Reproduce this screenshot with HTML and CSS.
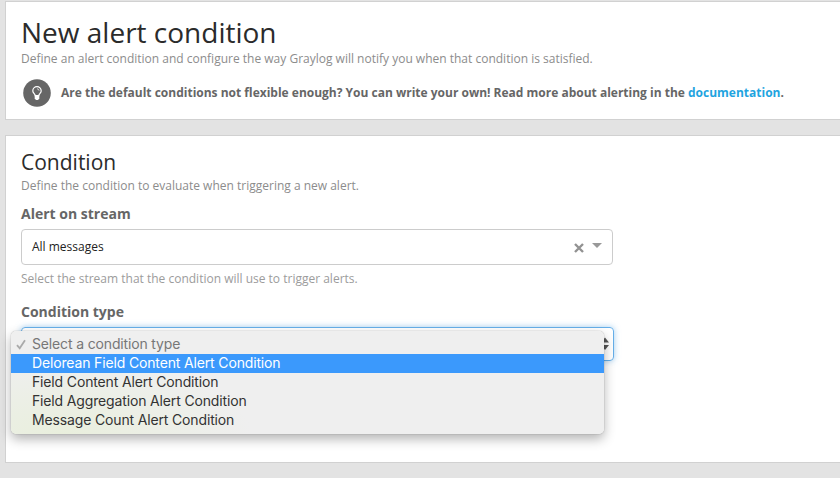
FILE: index.html
```html
<!DOCTYPE html>
<html lang="en">
<head>
<meta charset="utf-8">
<title>New alert condition</title>
<link rel="stylesheet" href="styles.css">
</head>
<body>
<section class="panel intro">
  <h1>New alert condition</h1>
  <p class="description">Define an alert condition and configure the way Graylog will notify you when that condition is satisfied.</p>
  <div class="support">
    <svg class="bulb" viewBox="0 0 28 28" width="28" height="28">
      <circle cx="14" cy="14" r="13.8" fill="#666"/>
      <path d="M12.2 16.6c0-1.500-2.400-2.500-2.400-4.700a4.200 4.200 0 0 1 8.400 0c0 2.200-2.400 3.200-2.400 4.700z" fill="none" stroke="#fff" stroke-width="1.200"/>
      <path d="M14 9.900c1.200 0 2 .7 2 1.700" fill="none" stroke="#fff" stroke-width=".8"/>
      <path d="M11.700 16.300h4.600v3.200l-1.300 1.500h-2l-1.300-1.500z" fill="#fff"/>
    </svg>
    <strong>Are the default conditions not flexible enough? You can write your own! Read more about alerting in the <a href="#">documentation</a>.</strong>
  </div>
</section>
<section class="panel condition">
  <h2>Condition</h2>
  <p class="description">Define the condition to evaluate when triggering a new alert.</p>
  <div class="label">Alert on stream</div>
  <div class="stream-select">
    <span class="value">All messages</span>
    <svg class="clear" viewBox="0 0 10 10" width="10" height="10"><path d="M1 1l8 8M9 1L1 9" stroke="#929292" stroke-width="2.400"/></svg>
    <span class="caret"></span>
  </div>
  <p class="help">Select the stream that the condition will use to trigger alerts.</p>
  <div class="label">Condition type</div>
  <div class="type-select">
    <svg class="arrows" viewBox="0 0 8 14" width="8" height="14"><path d="M0 5.500L4 .5l4 5zM0 8h8l-4 5z" fill="#555"/></svg>
    <ul class="menu">
      <li class="placeholder"><svg class="check" viewBox="0 0 10 11" width="10" height="11"><path d="M1 6.200L3.700 9.300 9 1.200" fill="none" stroke="#aaa" stroke-width="1.800"/></svg><span>Select a condition type</span></li>
      <li class="active"><span>Delorean Field Content Alert Condition</span></li>
      <li><span>Field Content Alert Condition</span></li>
      <li><span>Field Aggregation Alert Condition</span></li>
      <li><span>Message Count Alert Condition</span></li>
    </ul>
  </div>
</section>
</body>
</html>
```
FILE: styles.css
```css
* { box-sizing: border-box; }
body {
  margin: 0;
  padding: 1px 0 0 5px;
  height: 478px;
  overflow: hidden;
  background: #e3e3e3;
  color: #666;
  font: 12px/16px "Open Sans", sans-serif;
}
h1, h2, p, ul { margin: 0; padding: 0; }
h1, h2 { color: #2b2b2b; font-weight: 400; }
h1 { font-size: 28px; line-height: 38px; }
h2 { font-size: 21px; line-height: 28px; }
a { color: #1fa4e0; text-decoration: none; }
.panel {
  background: #fff;
  border: 1px solid #d1d1d1;
  border-right: 0;
  padding-left: 15px;
  white-space: nowrap;
}
.intro { height: 119px; padding-top: 11px; }
.condition { height: 328px; margin-top: 15px; padding-top: 12px; }
.description { color: #8c8c8c; }
.condition .description { margin-top: 2px; }
.support { display: flex; align-items: center; margin: 12px 0 0 2px; }
.bulb { margin-right: 10px; }
.label { font-size: 14px; font-weight: 700; line-height: 20px; }
.condition .description + .label { margin-top: 10px; }
.stream-select {
  display: flex;
  align-items: center;
  width: 592px;
  height: 36px;
  margin-top: 5px;
  padding: 0 10px;
  border: 1px solid #ccc;
  border-radius: 4px;
}
.value { flex: 1; color: #222; }
.clear { margin: 2px 8px 0 0; }
.caret { border: 5px solid transparent; border-top-color: #999; border-bottom: 0; margin-top: -3px; }
.help { margin-top: 6px; color: #9c9c9c; }
.help + .label { margin-top: 15px; }
.type-select {
  position: relative;
  width: 593px;
  height: 34px;
  margin-top: 5px;
  border: 1px solid #66afe9;
  border-radius: 4px;
  box-shadow: 0 0 6px rgba(102, 175, 233, .6);
}
.arrows { position: absolute; right: 4px; top: 9px; }
.menu {
  position: absolute;
  left: -11px;
  top: 3px;
  width: 593px;
  height: 103px;
  padding-top: 4px;
  list-style: none;
  border-radius: 5px;
  background: radial-gradient(ellipse 190px 75px at 50px 100%, #e9efdd, #efefef);
  box-shadow: 0 0 1px rgba(0, 0, 0, .5), 0 5px 12px rgba(0, 0, 0, .3);
  color: #333;
  font: 14px/17px Inter, sans-serif;
  letter-spacing: -.15px;
}
.menu li { position: relative; height: 19px; padding-left: 21px; }
.menu .placeholder { color: #777; }
.menu .active { background: #3b99fc; color: #fff; }
.check { position: absolute; left: 5px; top: 4px; }
```
